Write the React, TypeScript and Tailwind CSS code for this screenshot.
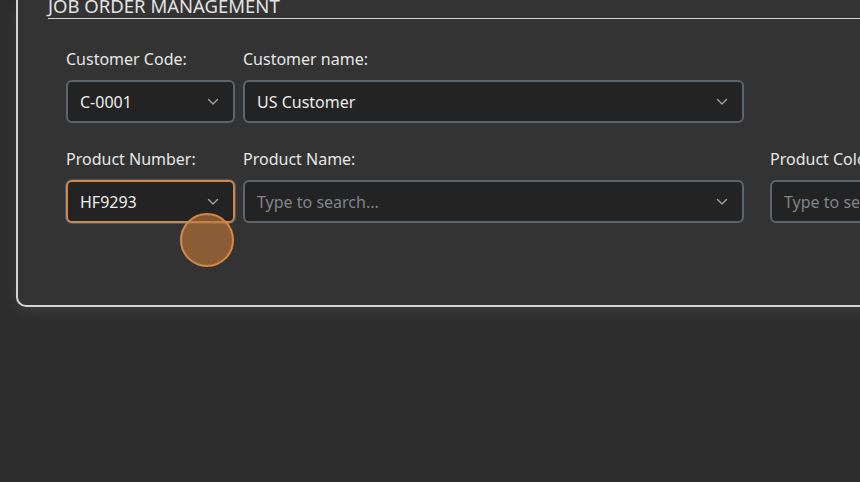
import React from 'react';

const Chevron: React.FC = () => (
    <svg width="12" height="8" viewBox="0 0 12 8" fill="none" className="shrink-0">
        <path d="M1.5 1.5 L6 6 L10.5 1.5" stroke="#a3a3a3" strokeWidth="1.4" strokeLinecap="round" strokeLinejoin="round" />
    </svg>
);

const Field: React.FC<{ label: string, value?: string, placeholder?: string, width: string, focused?: boolean, chevron?: boolean }> = ({ label, value, placeholder, width, focused, chevron = true }) => (
    <div className={`flex flex-col shrink-0 ${width}`}>
        <label className="text-[16px] leading-[24px] text-[#e6e6e6] whitespace-nowrap">{label}</label>
        <div className={`mt-[9px] h-[43px] flex items-center justify-between pl-[12px] pr-[14px] rounded-[6px] border-2 bg-[#232323] ${focused ? 'border-[#cf8742] ring-1 ring-[#4d5670]' : 'border-[#5e646c]'}`}>
            {value
                ? <span className="text-[16px] text-[#ececec] whitespace-nowrap">{value}</span>
                : <span className="text-[16px] text-[#80848a] whitespace-nowrap">{placeholder}</span>}
            {chevron && <Chevron />}
        </div>
    </div>
);

export default function App() {
    return (
        <div className="w-[860px] h-[482px] overflow-hidden bg-[#2d2d2d] pl-4" style={{ fontFamily: '"Noto Sans", "Open Sans", sans-serif' }}>
            <div className="relative flex flex-col w-[900px] bg-[#333333] border-l-2 border-b-2 border-[#d4d4d4] rounded-bl-[10px] shadow-[0_5px_14px_rgba(255,255,255,0.07)] pl-[30px] pb-[82px]">
                <div className="mt-[-6px] border-b border-[#cfcfcf] leading-[24px] text-[18.5px] text-[#e2e2e2]">JOB ORDER MANAGEMENT</div>
                <div className="pl-[18px] pt-[28px] flex flex-col gap-[24px]">
                    <div className="flex gap-[8px]">
                        <Field label="Customer Code:" value="C-0001" width="w-[169px]" />
                        <Field label="Customer name:" value="US Customer" width="w-[501px]" />
                    </div>
                    <div className="flex">
                        <Field label="Product Number:" value="HF9293" width="w-[169px]" focused />
                        <div className="ml-[8px]">
                            <Field label="Product Name:" placeholder="Type to search..." width="w-[501px]" />
                        </div>
                        <div className="ml-[26px]">
                            <Field label="Product Color:" placeholder="Type to search..." width="w-[169px]" chevron={false} />
                        </div>
                    </div>
                </div>
                {/* click indicator */}
                <div className="absolute left-[162px] top-[213px] w-[54px] h-[54px] rounded-full bg-[#c77a3a]/60 border-2 border-[#d48a45]" />
            </div>
        </div>
    );
}
